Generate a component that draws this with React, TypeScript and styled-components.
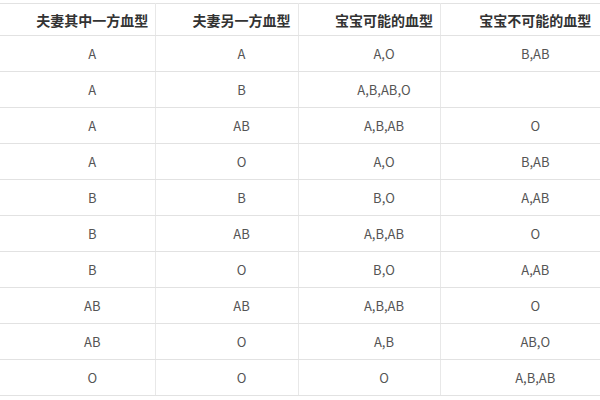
import React from "react";
import styled, { createGlobalStyle } from "styled-components";

const GlobalStyle = createGlobalStyle`
  html, body {
    margin: 0;
    padding: 0;
    background: #ffffff;
  }
`;

const Page = styled.div`
  width: 600px;
  height: 400px;
  padding-top: 3px;
  box-sizing: border-box;
  overflow: hidden;
  background: #ffffff;
  font-family: "Noto Sans CJK SC", "Noto Sans", sans-serif;
`;

const Table = styled.table`
  width: 600px;
  border-collapse: collapse;
  table-layout: fixed;
`;

const Col = styled.col<{ $width: number }>`
  width: ${({ $width }) => $width}px;
`;

const HeadCell = styled.th<{ $last?: boolean }>`
  height: 32px;
  padding: 0 0 0 30px;
  box-sizing: border-box;
  text-align: center;
  font-size: 14px;
  font-weight: 700;
  color: #333333;
  border-top: 1px solid #e2e2e2;
  border-bottom: 1px solid #e2e2e2;
  border-right: ${({ $last }) => ($last ? "none" : "1px solid #e8e8e8")};
  white-space: nowrap;
`;

const Cell = styled.td<{ $last?: boolean }>`
  height: 36px;
  padding: 0 0 0 30px;
  box-sizing: border-box;
  text-align: center;
  font-size: 13px;
  color: #555555;
  border-bottom: 1px solid #e2e2e2;
  border-right: ${({ $last }) => ($last ? "none" : "1px solid #e8e8e8")};
  white-space: nowrap;
`;

const headers = ["夫妻其中一方血型", "夫妻另一方血型", "宝宝可能的血型", "宝宝不可能的血型"];

const rows: string[][] = [
  ["A", "A", "A,O", "B,AB"],
  ["A", "B", "A,B,AB,O", ""],
  ["A", "AB", "A,B,AB", "O"],
  ["A", "O", "A,O", "B,AB"],
  ["B", "B", "B,O", "A,AB"],
  ["B", "AB", "A,B,AB", "O"],
  ["B", "O", "B,O", "A,AB"],
  ["AB", "AB", "A,B,AB", "O"],
  ["AB", "O", "A,B", "AB,O"],
  ["O", "O", "O", "A,B,AB"],
];

const widths = [155, 143, 142, 160];

export default function App() {
  return (
    <>
      <GlobalStyle />
      <Page>
        <Table>
          <colgroup>
            {widths.map((w, i) => (
              <Col key={i} $width={w} />
            ))}
          </colgroup>
          <thead>
            <tr>
              {headers.map((h, i) => (
                <HeadCell key={h} $last={i === headers.length - 1}>
                  {h}
                </HeadCell>
              ))}
            </tr>
          </thead>
          <tbody>
            {rows.map((r, ri) => (
              <tr key={ri}>
                {r.map((c, ci) => (
                  <Cell key={ci} $last={ci === r.length - 1}>
                    {c}
                  </Cell>
                ))}
              </tr>
            ))}
          </tbody>
        </Table>
      </Page>
    </>
  );
}
